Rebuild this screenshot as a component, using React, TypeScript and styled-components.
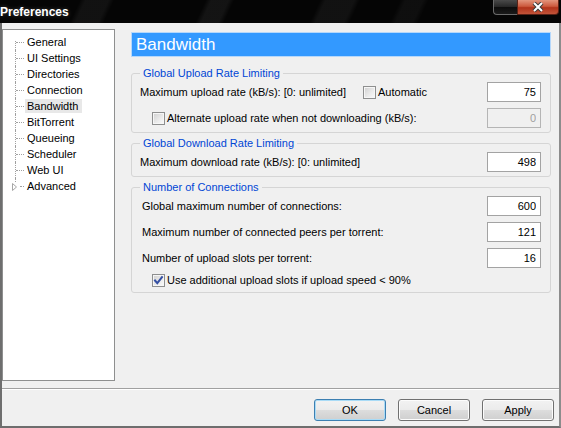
import React from 'react';
import styled, {createGlobalStyle} from 'styled-components';

const GlobalStyle = createGlobalStyle`
    html, body {
        margin: 0;
        padding: 0;
        background: #000;
    }
    body {
        font-family: 'Liberation Sans', Arial, sans-serif;
        font-size: 11px;
        color: #000;
    }
`;

const treeItems = ['General', 'UI Settings', 'Directories', 'Connection', 'Bandwidth', 'BitTorrent', 'Queueing', 'Scheduler', 'Web UI', 'Advanced'];

const CheckMark = () => (
    <svg width='11' height='11' viewBox='0 0 11 11'>
        <path d='M2 5.5 L4.3 8.2 L9 2.2' fill='none' stroke='#3550a3' strokeWidth='2' strokeLinecap='square' />
    </svg>
);

const Check: React.FC<{checked?: boolean}> = ({checked}) => <CheckBox>{checked && <CheckMark />}</CheckBox>;

export default function App() {
    return (
        <Window>
            <GlobalStyle />
            <TitleBar>
                <Caption>Preferences</Caption>
                <CaptionButtons>
                    <MinButton />
                    <CloseButton>
                        <svg width='12' height='10' viewBox='0 0 12 10'>
                            <path d='M2 1 L10 9 M10 1 L2 9' stroke='#3a3a3a' strokeWidth='4' />
                            <path d='M2 1 L10 9 M10 1 L2 9' stroke='#fff' strokeWidth='2' />
                        </svg>
                    </CloseButton>
                </CaptionButtons>
            </TitleBar>
            <Frame>
                <Main>
                    <Tree>
                        {treeItems.map((item, i) => (
                            <TreeItem key={item}>
                                <Connector $first={i === 0} $last={i === treeItems.length - 1}>
                                    {i === treeItems.length - 1 && (
                                        <Expander width='6' height='8' viewBox='0 0 6 8'>
                                            <path d='M0.5 0.5 L4.5 4 L0.5 7.5 Z' fill='#fff' stroke='#a6a6a6' />
                                        </Expander>
                                    )}
                                </Connector>
                                <TreeLabel $selected={item === 'Bandwidth'}>{item}</TreeLabel>
                            </TreeItem>
                        ))}
                    </Tree>
                    <Content>
                        <Header>Bandwidth</Header>

                        <Group>
                            <Legend>Global Upload Rate Limiting</Legend>
                            <Rows>
                                <Row>
                                    <Label $width={223}>Maximum upload rate (kB/s): [0: unlimited]</Label>
                                    <Check />
                                    <CheckText>Automatic</CheckText>
                                    <Spacer />
                                    <NumberInput value='75' readOnly />
                                </Row>
                                <Row $indent={12}>
                                    <Check />
                                    <CheckText>Alternate upload rate when not downloading (kB/s):</CheckText>
                                    <Spacer />
                                    <NumberInput value='0' readOnly disabled />
                                </Row>
                            </Rows>
                        </Group>

                        <Group>
                            <Legend>Global Download Rate Limiting</Legend>
                            <Rows>
                                <Row>
                                    <Label>Maximum download rate (kB/s): [0: unlimited]</Label>
                                    <Spacer />
                                    <NumberInput value='498' readOnly />
                                </Row>
                            </Rows>
                        </Group>

                        <Group $bottom={6}>
                            <Legend>Number of Connections</Legend>
                            <Rows>
                                <Row $indent={2}>
                                    <Label>Global maximum number of connections:</Label>
                                    <Spacer />
                                    <NumberInput value='600' readOnly />
                                </Row>
                                <Row $indent={2}>
                                    <Label>Maximum number of connected peers per torrent:</Label>
                                    <Spacer />
                                    <NumberInput value='121' readOnly />
                                </Row>
                                <Row $indent={2}>
                                    <Label>Number of upload slots per torrent:</Label>
                                    <Spacer />
                                    <NumberInput value='16' readOnly />
                                </Row>
                                <Row $indent={12} $height={12}>
                                    <Check checked />
                                    <CheckText>Use additional upload slots if upload speed &lt; 90%</CheckText>
                                </Row>
                            </Rows>
                        </Group>
                    </Content>
                </Main>
                <Footer>
                    <Button $default>OK</Button>
                    <Button>Cancel</Button>
                    <Button>Apply</Button>
                </Footer>
            </Frame>
        </Window>
    );
}

const Window = styled.div`
    width: 561px;
    height: 428px;
    display: flex;
    flex-direction: column;
    overflow: hidden;
`;

const TitleBar = styled.div`
    height: 23px;
    flex: none;
    display: flex;
    align-items: flex-start;
    background:
        linear-gradient(115deg, transparent 0 14%, rgba(255, 255, 255, 0.05) 15% 19%, transparent 20% 36%,
            rgba(255, 255, 255, 0.06) 37% 40%, transparent 41% 56%, rgba(255, 255, 255, 0.05) 57% 62%,
            transparent 63% 70%, rgba(255, 255, 255, 0.04) 71% 74%, transparent 75%),
        #050505;
`;

const Caption = styled.div`
    color: #fff;
    font-weight: bold;
    font-size: 12px;
    line-height: 14px;
    padding-top: 5px;
    margin-left: 0;
    text-shadow: 0 0 4px rgba(255, 255, 255, 0.25);
`;

const CaptionButtons = styled.div`
    margin-left: auto;
    margin-right: 2px;
    display: flex;
`;

const MinButton = styled.div`
    width: 24px;
    height: 15px;
    box-sizing: border-box;
    border: 1px solid #6a6a6a;
    border-top: none;
    border-right: none;
    border-radius: 0 0 0 4px;
    background: linear-gradient(#4a4a4a, #262626 50%, #0c0c0c 51%, #1a1a1a);
`;

const CloseButton = styled.div`
    width: 42px;
    height: 15px;
    box-sizing: border-box;
    border: 1px solid #5a2216;
    border-top: none;
    border-radius: 0 0 4px 0;
    background: linear-gradient(#e2957d, #cc5a3e 45%, #b1331a 55%, #c2543a);
    display: flex;
    align-items: center;
    justify-content: center;
`;

const Frame = styled.div`
    flex: 1;
    display: flex;
    flex-direction: column;
    background: #f0f0f0;
    border-left: 2px solid #6e6e6e;
    border-right: 2px solid #8c8c8c;
    border-bottom: 2px solid #6e6e6e;
`;

const Main = styled.div`
    height: 365px;
    flex: none;
    display: flex;
    align-items: flex-start;
`;

const Tree = styled.div`
    width: 113px;
    height: 352px;
    box-sizing: border-box;
    margin-top: 6px;
    padding-top: 4px;
    border: 1px solid #8e8f8f;
    background: #fff;
`;

const TreeItem = styled.div`
    display: flex;
    align-items: center;
    height: 16px;
`;

const Connector = styled.span<{$first: boolean; $last: boolean}>`
    position: relative;
    flex: none;
    width: 22px;
    height: 16px;

    &:before {
        content: '';
        position: absolute;
        left: 12px;
        top: ${({$first}) => ($first ? 7 : 0)}px;
        bottom: ${({$last}) => ($last ? 12 : 0)}px;
        border-left: 1px dotted #a0a0a0;
    }

    &:after {
        content: '';
        position: absolute;
        top: 8px;
        left: ${({$last}) => ($last ? 17 : 13)}px;
        right: 1px;
        border-top: 1px dotted #a0a0a0;
    }
`;

const Expander = styled.svg`
    position: absolute;
    left: 9px;
    top: 5px;
`;

const TreeLabel = styled.span<{$selected?: boolean}>`
    line-height: 14px;
    padding: 0 4px 0 2px;
    white-space: nowrap;
    background: ${({$selected}) => ($selected ? '#e8e8e8' : 'transparent')};
`;

const Content = styled.div`
    width: 420px;
    margin-left: 16px;
    padding-top: 9px;
`;

const Header = styled.div`
    height: 25px;
    box-sizing: border-box;
    border: 1px solid #b6d8fb;
    background: #3399ff;
    color: #fff;
    font-size: 17px;
    padding-left: 4px;
    display: flex;
    align-items: center;
`;

const Group = styled.fieldset<{$bottom?: number}>`
    margin: 4px 0 0;
    padding: 0 9px ${({$bottom}) => $bottom ?? 4}px 8px;
    border: 1px solid #d5d5d5;
    border-radius: 3px;
    min-width: 0;

    &:first-of-type {
        margin-top: 10px;
    }
`;

const Legend = styled.legend`
    padding: 0 3px;
    line-height: 13px;
    color: #0046d5;
`;

const Rows = styled.div`
    display: flex;
    flex-direction: column;
    gap: 6px;
    padding-top: 2px;
`;

const Row = styled.div<{$indent?: number; $height?: number}>`
    display: flex;
    align-items: center;
    height: ${({$height}) => $height ?? 20}px;
    padding-left: ${({$indent}) => $indent ?? 0}px;
`;

const Label = styled.span<{$width?: number}>`
    white-space: nowrap;
    ${({$width}) => ($width ? `width: ${$width}px; flex: none;` : '')}
`;

const CheckText = styled.span`
    margin-left: 2px;
    white-space: nowrap;
`;

const Spacer = styled.span`
    flex: 1;
`;

const CheckBox = styled.span`
    width: 13px;
    height: 13px;
    box-sizing: border-box;
    flex: none;
    border: 1px solid #8e8f8f;
    background: linear-gradient(135deg, #cfcfcf, #ececec 60%, #fafafa);
    box-shadow: inset 0 0 0 1px #f6f6f6;
    display: flex;
    align-items: center;
    justify-content: center;
`;

const NumberInput = styled.input`
    width: 54px;
    height: 20px;
    box-sizing: border-box;
    flex: none;
    margin: 0;
    padding: 0 4px;
    border: 1px solid #a3a3a3;
    background: #fff;
    font-family: 'Liberation Sans', Arial, sans-serif;
    font-size: 11px;
    color: #000;
    text-align: right;
    outline: none;

    &:disabled {
        background: #f0f0f0;
        border-color: #b5b5b5;
        color: #a0a0a0;
    }
`;

const Footer = styled.div`
    flex: 1;
    display: flex;
    justify-content: flex-end;
    align-items: flex-start;
    gap: 12px;
    padding: 10px 5px 0 0;
    border-top: 1px solid #a0a0a0;
    box-shadow: inset 0 1px 0 #fff;
`;

const Button = styled.button<{$default?: boolean}>`
    width: 72px;
    height: 22px;
    box-sizing: border-box;
    padding: 0;
    border: 1px solid ${({$default}) => ($default ? '#3c7fb1' : '#707070')};
    border-radius: 3px;
    background: linear-gradient(#f2f2f2, #ebebeb 50%, #dddddd 51%, #cfcfcf);
    box-shadow: inset 0 0 0 1px ${({$default}) => ($default ? '#a9dbf6' : '#fcfcfc')};
    font-family: 'Liberation Sans', Arial, sans-serif;
    font-size: 11px;
    color: #000;
`;
